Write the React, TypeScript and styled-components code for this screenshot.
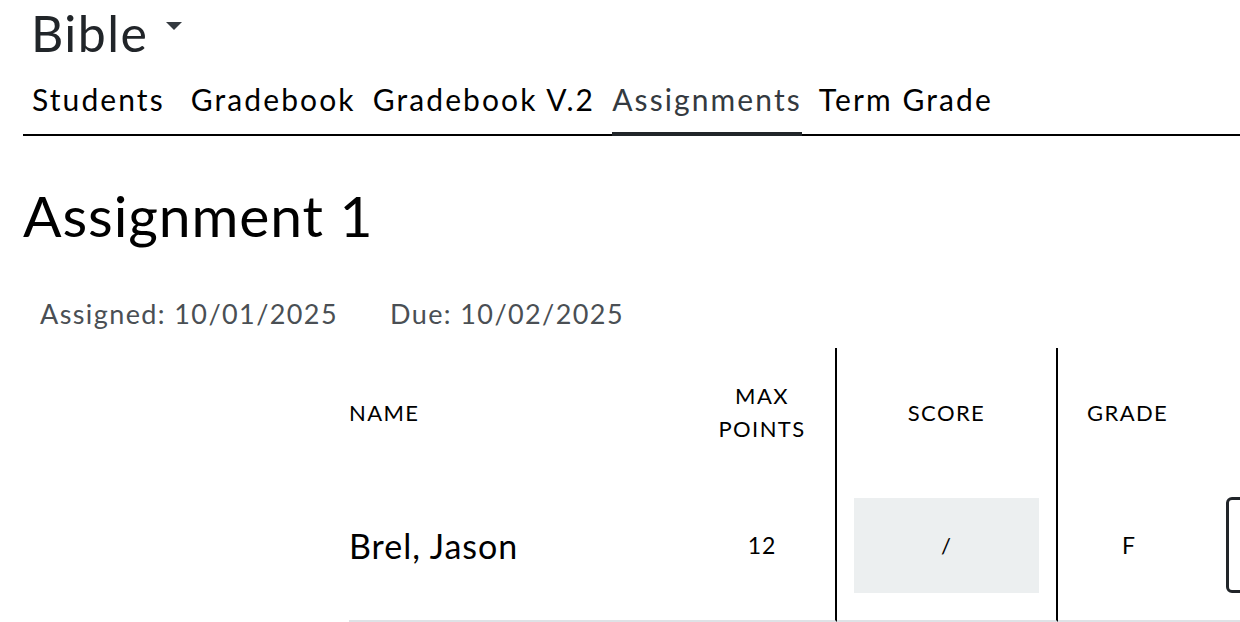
import React from "react";
import styled, { createGlobalStyle } from "styled-components";

const GlobalStyle = createGlobalStyle`
  *, *::before, *::after {
    box-sizing: border-box;
  }
  body {
    margin: 0;
    background: #ffffff;
    font-family: Lato, "Open Sans", sans-serif;
    color: #000000;
    overflow: hidden;
  }
`;

const tabs = ["Students", "Gradebook", "Gradebook V.2", "Assignments", "Term Grade"];

const Page = styled.div`
  padding: 3px 0 0 23px;
`;

const CourseTitle = styled.div`
  display: flex;
  align-items: center;
  gap: 17px;
  padding-left: 8px;
  font-size: 50px;
  letter-spacing: 1.5px;
  line-height: 60px;
  color: #212529;
`;

const Caret = styled.span`
  width: 0;
  height: 0;
  border-left: 8px solid transparent;
  border-right: 8px solid transparent;
  border-top: 8px solid #343a40;
  margin-top: -14px;
`;

const TabBar = styled.nav`
  display: flex;
  margin-top: 17px;
  padding-left: 9px;
  border-bottom: 2px solid #000000;
`;

const Tab = styled.div<{ active?: boolean; spacing: number }>`
  font-size: 30px;
  letter-spacing: 2.1px;
  line-height: 38px;
  padding-bottom: 14px;
  margin-right: ${({ spacing }) => spacing}px;
  margin-bottom: -2px;
  color: ${({ active }) => (active ? "#343a40" : "#000000")};
  border-bottom: 4px solid ${({ active }) => (active ? "#212529" : "transparent")};
`;

const Heading = styled.h1`
  margin: 46px 0 0 0;
  font-size: 57px;
  letter-spacing: 0.9px;
  font-weight: 400;
  line-height: 66px;
`;

const Dates = styled.div`
  display: flex;
  gap: 52px;
  margin: 49px 0 0 17px;
  font-size: 27px;
  letter-spacing: 1.4px;
  color: #4a4f54;
`;

const Table = styled.div`
  display: grid;
  grid-template-columns: 340px 148px 221px 142px 160px;
  margin: 18px 0 0 326px;
  width: 1011px;
`;

const HeadCell = styled.div<{ center?: boolean; divider?: boolean; padLeft?: number }>`
  height: 125px;
  display: flex;
  align-items: center;
  justify-content: ${({ center }) => (center ? "center" : "flex-start")};
  text-align: ${({ center }) => (center ? "center" : "left")};
  padding-left: ${({ padLeft = 0 }) => padLeft}px;
  padding-top: 3px;
  font-size: 22px;
  letter-spacing: 1.4px;
  line-height: 33px;
  text-transform: uppercase;
  border-right: ${({ divider }) => (divider ? "2px solid #000000" : "none")};
`;

const BodyCell = styled.div<{ center?: boolean; divider?: boolean; size: number }>`
  height: 149px;
  padding-bottom: 3px;
  display: flex;
  align-items: center;
  justify-content: ${({ center }) => (center ? "center" : "flex-start")};
  font-size: ${({ size }) => size}px;
  letter-spacing: 1px;
  border-right: ${({ divider }) => (divider ? "2px solid #000000" : "none")};
  border-bottom: 2px solid #dee2e6;
`;

const ScoreBox = styled.div`
  width: 185px;
  height: 95px;
  background: #eceff0;
  display: flex;
  align-items: center;
  justify-content: center;
  font-size: 22px;
`;

const ActionButton = styled.div`
  width: 120px;
  height: 96px;
  margin-left: 26px;
  border: 3px solid #212529;
  border-radius: 6px;
`;

export default function App() {
  return (
    <>
      <GlobalStyle />
      <Page>
        <CourseTitle>
          Bible
          <Caret />
        </CourseTitle>
        <TabBar>
          {tabs.map((t, i) => (
            <Tab key={t} active={t === "Assignments"} spacing={i === 0 ? 26 : 17}>
              {t}
            </Tab>
          ))}
        </TabBar>
        <Heading>Assignment 1</Heading>
        <Dates>
          <span>Assigned: 10/01/2025</span>
          <span>Due: 10/02/2025</span>
        </Dates>
        <Table>
          <HeadCell>Name</HeadCell>
          <HeadCell center divider>
            Max
            <br />
            Points
          </HeadCell>
          <HeadCell center divider>
            Score
          </HeadCell>
          <HeadCell padLeft={29}>Grade</HeadCell>
          <HeadCell />
          <BodyCell size={34}>Brel, Jason</BodyCell>
          <BodyCell size={23} center divider>
            12
          </BodyCell>
          <BodyCell size={23} center divider>
            <ScoreBox>/</ScoreBox>
          </BodyCell>
          <BodyCell size={23} center>
            F
          </BodyCell>
          <BodyCell size={23}>
            <ActionButton />
          </BodyCell>
        </Table>
      </Page>
    </>
  );
}
